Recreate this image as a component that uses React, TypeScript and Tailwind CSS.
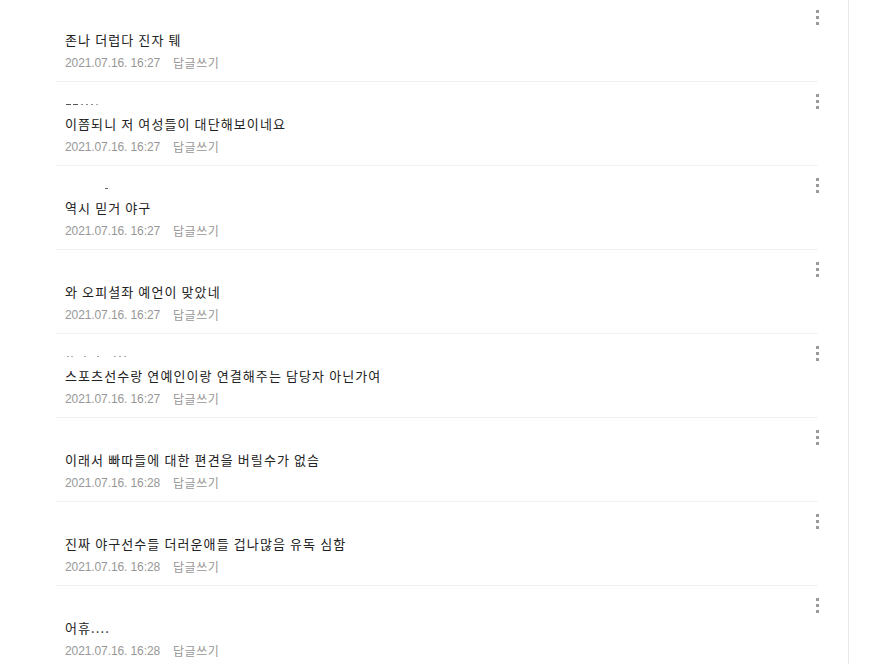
import React from "react";

type Comment = {
  text: string;
  date: string;
  ghost?: { x: number; w: number; c: string }[];
};

const comments: Comment[] = [
  { text: "존나 더럽다 진자 퉤", date: "2021.07.16. 16:27" },
  {
    text: "이쯤되니 저 여성들이 대단해보이네요",
    date: "2021.07.16. 16:27",
    ghost: [
      { x: 10, w: 5, c: "#555" },
      { x: 17, w: 5, c: "#555" },
      { x: 25, w: 2, c: "#888" },
      { x: 30, w: 2, c: "#888" },
      { x: 35, w: 2, c: "#888" },
      { x: 40, w: 2, c: "#aaa" },
    ],
  },
  {
    text: "역시 믿거 야구",
    date: "2021.07.16. 16:27",
    ghost: [{ x: 49, w: 3, c: "#666" }],
  },
  { text: "와 오피셜좌 예언이 맞았네", date: "2021.07.16. 16:27" },
  {
    text: "스포츠선수랑 연예인이랑 연결해주는 담당자 아닌가여",
    date: "2021.07.16. 16:27",
    ghost: [
      { x: 11, w: 2, c: "#aaa" },
      { x: 15, w: 2, c: "#aaa" },
      { x: 28, w: 2, c: "#aaa" },
      { x: 41, w: 2, c: "#aaa" },
      { x: 58, w: 2, c: "#aaa" },
      { x: 63, w: 2, c: "#aaa" },
      { x: 68, w: 2, c: "#aaa" },
    ],
  },
  { text: "이래서 빠따들에 대한 편견을 버릴수가 없슴", date: "2021.07.16. 16:28" },
  { text: "진짜 야구선수들 더러운애들 겁나많음 유독 심함", date: "2021.07.16. 16:28" },
  { text: "어휴....", date: "2021.07.16. 16:28" },
];

function MoreDots() {
  return (
    <div className="absolute right-[-1px] top-[10px] flex flex-col gap-[3px]">
      <span className="block h-[3px] w-[3px] bg-[#9a9a9a]" />
      <span className="block h-[3px] w-[3px] bg-[#9a9a9a]" />
      <span className="block h-[3px] w-[3px] bg-[#9a9a9a]" />
    </div>
  );
}

export default function App() {
  return (
    <div
      className="h-[664px] w-[887px] overflow-hidden bg-white"
      style={{ fontFamily: '"Noto Sans CJK KR", "Noto Sans", sans-serif' }}
    >
      <div className="h-full w-[849px] border-r border-[#e8e8e8]">
        <ul className="ml-[56px] w-[762px]">
          {comments.map((c, i) => (
            <li
              key={i}
              className="relative mb-[2px] flex h-[82px] flex-col border-b border-[#f2f2f2] pl-[9px] pt-[20px]"
            >
              <div className="relative h-[3px]">
                {c.ghost?.map((g, j) => (
                  <span
                    key={j}
                    className="absolute top-0 block h-[1px]"
                    style={{ left: g.x - 9, width: g.w, backgroundColor: g.c }}
                  />
                ))}
              </div>
              <p className="mt-[8px] text-[13px] leading-[18px] tracking-[1.1px] text-[#222]">
                {c.text}
              </p>
              <div className="mt-[6px] flex items-center text-[12px] leading-[16px] text-[#979797]">
                <span
                  className="tracking-[-0.1px]"
                  style={{ fontFamily: '"Liberation Sans", sans-serif' }}
                >
                  {c.date}
                </span>
                <span className="ml-[13px] tracking-[0.5px]">답글쓰기</span>
              </div>
              <MoreDots />
            </li>
          ))}
        </ul>
      </div>
    </div>
  );
}
